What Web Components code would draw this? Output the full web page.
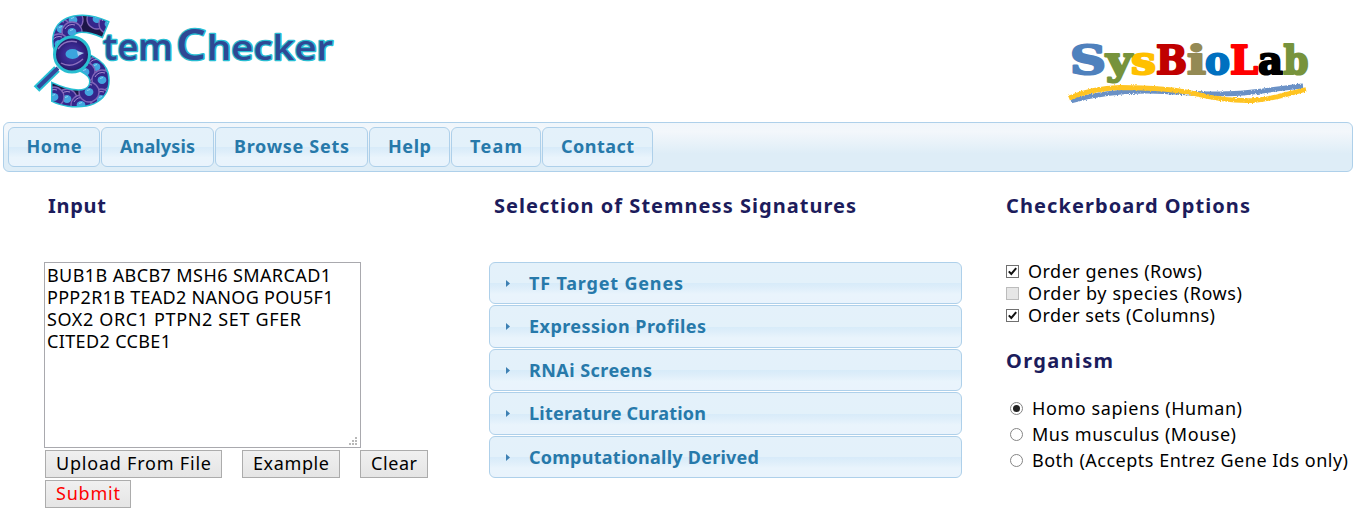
<!DOCTYPE html>
<html lang="en">
<head>
<meta charset="utf-8">
<title>StemChecker</title>
<style>
body{margin:0;background:#fff;color:#000;font:18px/22px "Noto Sans","Open Sans",sans-serif;overflow:hidden}
</style>
</head>
<body>
<app-page>
  <stem-logo slot="header"></stem-logo>
  <lab-logo slot="header"></lab-logo>
  <nav-bar slot="nav">
    <nav-tab style="width:92px"><fit-text w="55">Home</fit-text></nav-tab>
    <nav-tab style="width:113px"><fit-text w="75">Analysis</fit-text></nav-tab>
    <nav-tab style="width:153px"><fit-text w="115">Browse Sets</fit-text></nav-tab>
    <nav-tab style="width:81px"><fit-text w="43">Help</fit-text></nav-tab>
    <nav-tab style="width:90px"><fit-text w="52">Team</fit-text></nav-tab>
    <nav-tab style="width:111px"><fit-text w="73">Contact</fit-text></nav-tab>
  </nav-bar>
  <section-title slot="input"><fit-text w="58">Input</fit-text></section-title>
  <gene-box slot="input">
    <fit-text w="284">BUB1B ABCB7 MSH6 SMARCAD1</fit-text>
    <fit-text w="286.500">PPP2R1B TEAD2 NANOG POU5F1</fit-text>
    <fit-text w="254">SOX2 ORC1 PTPN2 SET GFER</fit-text>
    <fit-text w="124">CITED2 CCBE1</fit-text>
  </gene-box>
  <button-row slot="input">
    <push-button style="width:177px"><fit-text w="155">Upload From File</fit-text></push-button>
    <push-button style="width:98px"><fit-text w="76">Example</fit-text></push-button>
    <push-button style="width:68px"><fit-text w="46">Clear</fit-text></push-button>
    <push-button style="width:86px;color:#f00"><fit-text w="64">Submit</fit-text></push-button>
  </button-row>
  <section-title slot="signatures"><fit-text w="362">Selection of Stemness Signatures</fit-text></section-title>
  <accordion-list slot="signatures">
    <accordion-item style="height:42px"><fit-text w="154">TF Target Genes</fit-text></accordion-item>
    <accordion-item style="height:43px"><fit-text w="177">Expression Profiles</fit-text></accordion-item>
    <accordion-item style="height:42px"><fit-text w="123">RNAi Screens</fit-text></accordion-item>
    <accordion-item style="height:43px"><fit-text w="177">Literature Curation</fit-text></accordion-item>
    <accordion-item style="height:42px"><fit-text w="230">Computationally Derived</fit-text></accordion-item>
  </accordion-list>
  <section-title slot="options"><fit-text w="244">Checkerboard Options</fit-text></section-title>
  <option-group slot="options">
    <option-item type="checkbox" checked><fit-text w="174">Order genes (Rows)</fit-text></option-item>
    <option-item type="checkbox" disabled><fit-text w="214">Order by species (Rows)</fit-text></option-item>
    <option-item type="checkbox" checked><fit-text w="187">Order sets (Columns)</fit-text></option-item>
  </option-group>
  <section-title slot="options" class="second"><fit-text w="107">Organism</fit-text></section-title>
  <option-group slot="options" wide>
    <option-item type="radio" checked><fit-text w="210">Homo sapiens (Human)</fit-text></option-item>
    <option-item type="radio"><fit-text w="204">Mus musculus (Mouse)</fit-text></option-item>
    <option-item type="radio"><fit-text w="316">Both (Accepts Entrez Gene Ids only)</fit-text></option-item>
  </option-group>
</app-page>
<script>
function component(name, html, setup) {
  customElements.define(name, class extends HTMLElement {
    constructor() {
      super();
      this.attachShadow({mode: 'open'}).innerHTML = html;
    }
    connectedCallback() { if (setup) setup(this, this.shadowRoot); }
  });
}

component('app-page', `<style>
:host{display:block;width:1361px;height:521px}
header{height:122px;display:flex;justify-content:space-between;box-sizing:border-box;padding:0 45px 0 25px}
nav{padding:0 8px 0 3px}
main{display:grid;grid-template-columns:445px 517px 1fr;padding:22px 0 0 44px}
::slotted(section-title){margin-left:4px}
.b ::slotted(section-title){margin-left:5px}
.c ::slotted(section-title){margin-left:0}
.c ::slotted(.second){margin:23px 0 22px}
</style>
<header><slot name="header"></slot></header>
<nav><slot name="nav"></slot></nav>
<main><section><slot name="input"></slot></section><section class="b"><slot name="signatures"></slot></section><section class="c"><slot name="options"></slot></section></main>`);

component('nav-bar', `<style>
:host{display:flex;gap:1px;box-sizing:border-box;height:50px;padding:4px;border:1px solid #aed0ea;border-radius:6px;background:linear-gradient(#f0f6fb 0,#f3f7fb 18%,#deedf7 64%,#deedf7 100%)}
</style><slot></slot>`);

component('nav-tab', `<style>
:host{display:flex;justify-content:center;box-sizing:border-box;height:40px;padding-top:7px;border:1px solid #aed0ea;border-radius:6px;color:#2779aa;font-weight:700;background:linear-gradient(#e4f1fa 0,#e3f1fa 50%,#d7ebf9 50%,#deeefa 62%,#e9f4fc 78%,#e9f3fc 100%)}
</style><slot></slot>`);

component('section-title', `<style>
:host{display:block;height:26px;margin-bottom:42px;font-size:20px;line-height:24px;font-weight:700;color:#1c1c5c}
h2{font:inherit;margin:0}
</style><h2><slot></slot></h2>`);

component('gene-box', `<style>
:host{display:flex;flex-direction:column;align-items:flex-start;position:relative;box-sizing:border-box;width:317px;height:186px;padding:1px 2px;border:1px solid #a9a9ae}
svg{position:absolute;right:3px;bottom:2px}
</style><slot></slot><svg width="8" height="8" fill="#b8b8b8"><path d="M6 0h2v2h-2zM3 3h2v2h-2zM6 3h2v2h-2zM0 6h2v2h-2zM3 6h2v2h-2zM6 6h2v2h-2z"/></svg>`);

component('button-row', `<style>
:host{display:flex;flex-wrap:wrap;column-gap:20px;row-gap:2px;width:400px;padding:2px 0 0 1px}
</style><slot></slot>`);

component('push-button', `<style>
:host{display:block;height:28px}
button{display:flex;justify-content:center;width:100%;height:28px;box-sizing:border-box;padding:1px 0 0;margin:0;border:1px solid #acacac;background:linear-gradient(#f0f0f0,#e5e5e5);font:inherit;color:inherit}
</style><button type="button"><slot></slot></button>`);

component('accordion-list', `<style>
:host{display:flex;flex-direction:column;width:473px;gap:1px}
</style><slot></slot>`);

component('accordion-item', `<style>
:host{display:flex;align-items:flex-start;box-sizing:border-box;padding:9px 0 0 16px;border:1px solid #aed0ea;border-radius:6px;color:#2779aa;font-weight:700;background:linear-gradient(#e4f1fa 0,#e3f1fa 50%,#d7ebf9 50%,#deeefa 62%,#e9f4fc 78%,#e9f3fc 100%)}
svg{margin:8px 19px 0 0}
</style><svg width="4" height="8" fill="#3d80b3"><path d="M0 0L4 3.5L0 7z"/></svg><slot></slot>`);

component('option-group', `<style>
:host{display:flex;flex-direction:column;margin-top:-2px}
:host([wide]){gap:4px;margin:0 0 0 4px}
</style><slot></slot>`);

component('option-item', `<style>
:host{display:block;height:22px}
label{display:flex;width:max-content;position:relative}
input{appearance:none;box-sizing:border-box;width:13px;height:13px;margin:5px 9px 0 0;border:1px solid #707070;background:#fff;flex:none;display:grid;place-items:center}
input[type=radio]{border-radius:50%;border-color:#858585}
input[type=radio]:checked::before{content:"";width:7px;height:7px;border-radius:50%;background:#222}
input:disabled{background:#e6e6e6;border-color:#bcbcbc}
svg{position:absolute;left:2px;top:7px;display:none}
:host([type=checkbox][checked]) svg{display:block}
</style><label><input><svg width="9" height="9" fill="none" stroke="#111" stroke-width="2"><path d="M.8 4.4L3.3 7L8.2 1.2"/></svg><slot></slot></label>`, (el, root) => {
  const input = root.querySelector('input');
  input.type = el.getAttribute('type');
  input.checked = el.hasAttribute('checked');
  input.disabled = el.hasAttribute('disabled');
});

component('stem-logo', `<style>
:host{display:block;width:320px;height:120px}
svg{display:block}
text{font-family:"Open Sans","Noto Sans",sans-serif}
</style><svg width="320" height="120" viewBox="25 0 320 120">
<defs>
<g id="cell"><circle r="10" fill="#35268b" stroke="#8064b8" stroke-width="1.3"/><path d="M-7-3A8 8 0 0 1 3-7" fill="none" stroke="#a58ad0" stroke-width="1"/><ellipse rx="4.4" ry="4" fill="#42a4df"/><path d="M-2-1.5L1-2.5" stroke="#8bd4f2"/></g>
<pattern id="cells" patternUnits="userSpaceOnUse" x="25" y="0" width="100" height="120">
<rect width="100" height="120" fill="#1d1648"/>
<use href="#cell" x="48" y="20"/><use href="#cell" x="72" y="19"/><use href="#cell" x="84" y="24"/><use href="#cell" x="36" y="29"/><use href="#cell" x="47" y="32"/><use href="#cell" x="34" y="44"/><use href="#cell" x="56" y="48"/><use href="#cell" x="71" y="67"/><use href="#cell" x="60" y="72"/><use href="#cell" x="77" y="80"/><use href="#cell" x="42" y="99"/><use href="#cell" x="56" y="105"/><use href="#cell" x="76" y="99"/><use href="#cell" x="64" y="92"/><use href="#cell" x="29" y="97"/>
</pattern>
<radialGradient id="lens"><stop offset="0" stop-color="#4b3fa5"/><stop offset=".6" stop-color="#35258a"/><stop offset="1" stop-color="#241a62"/></radialGradient>
</defs>
<text x="47" y="104.800" font-size="122" font-weight="700" textLength="66" lengthAdjust="spacingAndGlyphs" fill="url(#cells)" stroke="#27bfd3" stroke-width="3" paint-order="stroke">S</text>
<path d="M57 69L36.500 89" stroke="#25c1d5" stroke-width="8"/>
<path d="M58 68L38 87.500" stroke="#34489b" stroke-width="4"/>
<circle cx="72" cy="54.500" r="17.500" fill="url(#lens)" stroke="#29bed1" stroke-width="3"/>
<path d="M58 49Q65 39 77 42M61 63Q72 69 83 59" fill="none" stroke="#8c70be" stroke-width="1.400"/>
<ellipse cx="72.500" cy="54" rx="7" ry="5" fill="#3ba5de"/><path d="M77 51L84 53L78 56" fill="#a8c9ef"/>
<g fill="#2e4894" stroke="#29bdd2" stroke-width="2.600" paint-order="stroke" stroke-linejoin="round" font-weight="600">
<text x="103" y="60" font-size="36" textLength="70" lengthAdjust="spacingAndGlyphs">tem</text>
<text y="60"><tspan x="176" font-size="43.500" textLength="30" lengthAdjust="spacingAndGlyphs">C</tspan><tspan x="207" font-size="35" textLength="126" lengthAdjust="spacingAndGlyphs">hecker</tspan></text>
</g></svg>`);

component('lab-logo', `<style>
:host{display:block;width:261px;height:120px}
svg{display:block}
text{font-family:"DejaVu Serif",serif;font-weight:700;font-size:39.5px}
</style><svg width="261" height="120" viewBox="1055 0 261 120">
<defs><filter id="chalk" x="-5%" y="-40%" width="110%" height="180%"><feTurbulence type="fractalNoise" baseFrequency=".7" numOctaves="2" seed="4"/><feDisplacementMap in="SourceGraphic" scale="3" xChannelSelector="R" yChannelSelector="G"/></filter></defs>
<text y="74" stroke-width="2.200" stroke-linejoin="round"><tspan x="1070" textLength="36" lengthAdjust="spacingAndGlyphs" fill="#4f81bd" stroke="#4f81bd">S</tspan><tspan x="1106" textLength="26" lengthAdjust="spacingAndGlyphs" fill="#77933c" stroke="#77933c">y</tspan><tspan x="1131" textLength="25" lengthAdjust="spacingAndGlyphs" fill="#ffc000" stroke="#ffc000">s</tspan><tspan x="1156" textLength="31" lengthAdjust="spacingAndGlyphs" fill="#c00000" stroke="#c00000">B</tspan><tspan x="1187" textLength="19" lengthAdjust="spacingAndGlyphs" fill="#948a54" stroke="#948a54">i</tspan><tspan x="1205" textLength="25" lengthAdjust="spacingAndGlyphs" fill="#0070c0" stroke="#0070c0">o</tspan><tspan x="1230" textLength="28" lengthAdjust="spacingAndGlyphs" fill="#f00" stroke="#f00">L</tspan><tspan x="1258" textLength="25" lengthAdjust="spacingAndGlyphs" fill="#000" stroke="#000">a</tspan><tspan x="1283.500" textLength="25" lengthAdjust="spacingAndGlyphs" fill="#77933c" stroke="#77933c">b</tspan></text>
<g fill="none" stroke-width="4.800" filter="url(#chalk)">
<path d="M1071 101C1100 92.500 1130 90 1165 91.500C1190 93 1210 95 1235 93.500C1262 92 1280 88 1303 86" stroke="#6a91c6"/>
<path d="M1069 98C1085 91.500 1100 88 1120 87.500C1150 87.500 1175 89 1196 94C1220 100 1235 101 1253 100.500C1275 99 1290 93 1306 89.500" stroke="#ffc420"/>
</g></svg>`);

/* Single text line whose tracking is adjusted so that it fills the width in its "w" attribute. */
component('fit-text', `<style>:host{display:block;white-space:nowrap;flex:none;width:max-content}</style><slot></slot>`, el => {
  const natural = el.getBoundingClientRect().width;
  const n = el.textContent.length;
  const target = +el.getAttribute('w');
  const spacing = (target - natural) / (n - 1);
  el.style.letterSpacing = spacing.toFixed(3) + 'px';
  el.style.marginRight = (-spacing).toFixed(3) + 'px';
});
</script>
</body>
</html>
